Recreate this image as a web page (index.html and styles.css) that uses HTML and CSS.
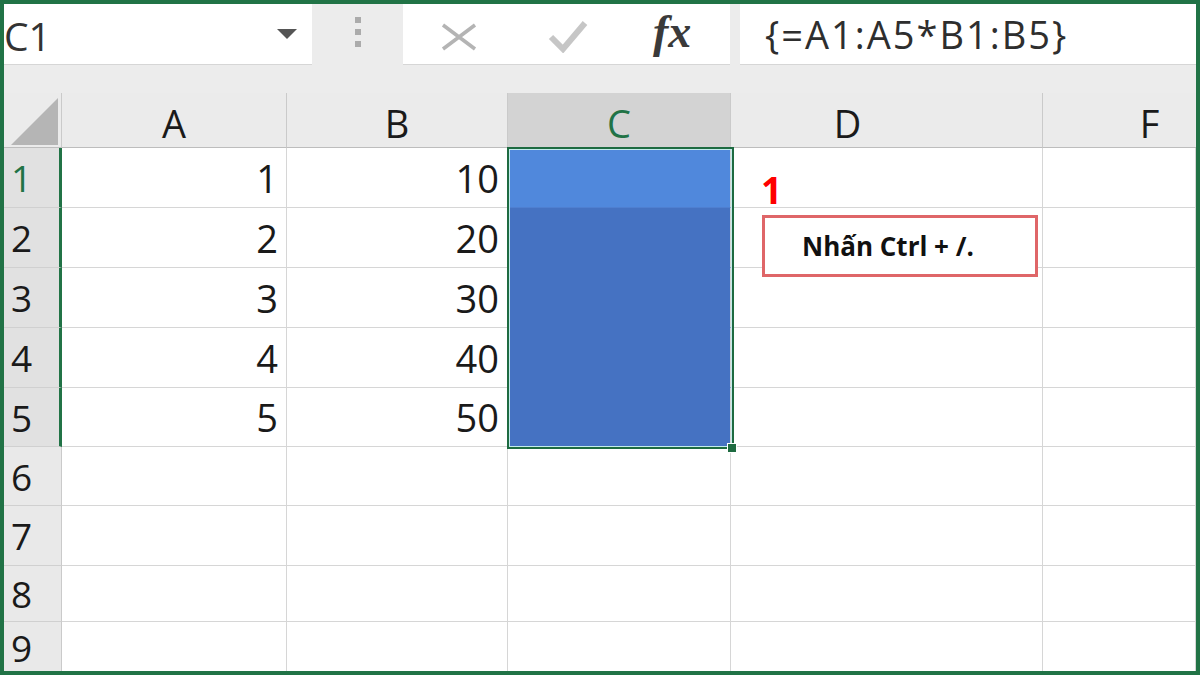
FILE: index.html
```html
<!DOCTYPE html>
<html lang="vi">
<head>
    <meta charset="UTF-8">
    <meta name="viewport" content="width=device-width, initial-scale=1.0">
    <title>Mảng công thức</title>
    <link rel="stylesheet" href="styles.css">
</head>
<body>
    <div class="frame">
        <!-- thanh công thức -->
        <div class="toolbar">
            <div class="namebox">
                <span class="ref">C1</span>
                <span class="caret"></span>
            </div>
            <div class="grip"><i></i><i></i><i></i></div>
            <div class="fx-buttons">
                <svg class="ico-x" width="38" height="28" viewBox="0 0 38 28">
                    <path d="M3 2 L35 26 M35 2 L3 26" stroke="#b4b4b4" stroke-width="3.6" fill="none"/>
                </svg>
                <svg class="ico-ok" width="40" height="34" viewBox="0 0 40 34">
                    <polyline points="3,18 15,30 37,4" stroke="#c6c6c6" stroke-width="6" fill="none"/>
                </svg>
                <span class="fx">fx</span>
            </div>
            <div class="formula">{=A1:A5*B1:B5}</div>
        </div>

        <!-- bảng tính -->
        <div class="sheet">
            <div class="hd corner"><span class="tri"></span></div>
            <div class="hd">A</div>
            <div class="hd">B</div>
            <div class="hd active">C</div>
            <div class="hd col-d">D</div>
            <div class="hd col-f">F</div>

            <div class="rh sel current">1</div>
            <div class="cell num">1</div>
            <div class="cell num">10</div>
            <div class="cell fill-top"></div>
            <div class="cell"></div>
            <div class="cell"></div>

            <div class="rh sel">2</div>
            <div class="cell num">2</div>
            <div class="cell num">20</div>
            <div class="cell fill"></div>
            <div class="cell"></div>
            <div class="cell"></div>

            <div class="rh sel">3</div>
            <div class="cell num">3</div>
            <div class="cell num">30</div>
            <div class="cell fill"></div>
            <div class="cell"></div>
            <div class="cell"></div>

            <div class="rh sel">4</div>
            <div class="cell num">4</div>
            <div class="cell num">40</div>
            <div class="cell fill"></div>
            <div class="cell"></div>
            <div class="cell"></div>

            <div class="rh sel">5</div>
            <div class="cell num">5</div>
            <div class="cell num">50</div>
            <div class="cell fill"></div>
            <div class="cell"></div>
            <div class="cell"></div>

            <div class="rh">6</div>
            <div class="cell"></div>
            <div class="cell"></div>
            <div class="cell"></div>
            <div class="cell"></div>
            <div class="cell"></div>

            <div class="rh">7</div>
            <div class="cell"></div>
            <div class="cell"></div>
            <div class="cell"></div>
            <div class="cell"></div>
            <div class="cell"></div>

            <div class="rh">8</div>
            <div class="cell"></div>
            <div class="cell"></div>
            <div class="cell"></div>
            <div class="cell"></div>
            <div class="cell"></div>

            <div class="rh">9</div>
            <div class="cell"></div>
            <div class="cell"></div>
            <div class="cell"></div>
            <div class="cell"></div>
            <div class="cell"></div>

            <!-- vùng chọn C1:C5 -->
            <div class="selection"></div>
            <div class="handle"></div>

            <!-- chú thích -->
            <div class="step">1</div>
            <div class="callout">Nhấn Ctrl + /.</div>
        </div>
    </div>
</body>
</html>
```

FILE: styles.css
```css
body {
    margin: 0;
    padding: 0;
    font-family: "Open Sans", "Noto Sans", sans-serif;
    color: #1a1a1a;
}
.frame {
    width: 1200px;
    height: 675px;
    box-sizing: border-box;
    border: 4px solid #217346;
    background: #ececec;
    display: flex;
    flex-direction: column;
    overflow: hidden;
}

/* thanh công thức */
.toolbar {
    display: flex;
    height: 61px;
    margin-bottom: 28px;
    flex-shrink: 0;
}
.namebox {
    width: 308px;
    background: #fff;
    border-bottom: 1px solid #d6d6d6;
    display: flex;
    align-items: center;
    justify-content: space-between;
    padding: 0 15px 0 0;
    box-sizing: border-box;
}
.ref {
    font-size: 39px;
    color: #333;
    line-height: 1;
    margin-top: 2px;
}
.caret {
    width: 0;
    height: 0;
    border-left: 10px solid transparent;
    border-right: 10px solid transparent;
    border-top: 10px solid #555;
    margin-top: -1px;
}
.grip {
    width: 91px;
    display: flex;
    flex-direction: column;
    align-items: center;
    justify-content: center;
    gap: 6px;
    margin-top: -5px;
}
.grip i {
    width: 6px;
    height: 6px;
    background: #ababab;
}
.fx-buttons {
    width: 327px;
    background: #fff;
    border-bottom: 1px solid #d6d6d6;
    display: flex;
    align-items: center;
}
.ico-x {
    margin-left: 37px;
    margin-top: 6px;
}
.ico-ok {
    margin-left: 70px;
    margin-top: 4px;
}
.fx {
    margin-left: 65px;
    font-family: "Liberation Serif", serif;
    font-style: italic;
    font-weight: bold;
    font-size: 46px;
    color: #3a3a3a;
    line-height: 1;
    margin-top: -4px;
}
.formula {
    flex: 1;
    margin-left: 10px;
    background: #fff;
    border-bottom: 1px solid #d6d6d6;
    display: flex;
    align-items: center;
    padding-left: 25px;
    font-size: 38px;
    letter-spacing: 2px;
    color: #2e2e2e;
}

/* bảng tính */
.sheet {
    position: relative;
    flex: 1;
    display: grid;
    grid-template-columns: 58px 225px 221px 223px 312px 153px;
    grid-template-rows: 55px 60px 60px 60px 60px 59px 59px 60px 56px 1fr;
    overflow: hidden;
}
.hd {
    background: #ebebeb;
    border-right: 1px solid #cacaca;
    border-bottom: 1px solid #bdbdbd;
    display: flex;
    align-items: center;
    justify-content: center;
    font-size: 38px;
    padding-top: 6px;
    box-sizing: border-box;
}
.hd.active {
    background: #d3d3d3;
    color: #217346;
}
.hd.col-d {
    padding-right: 78px;
}
.hd.col-f {
    padding-left: 60px;
    border-right: 0;
}
.corner {
    justify-content: flex-end;
    align-items: flex-end;
    padding: 0 3px 2px 0;
}
.tri {
    width: 47px;
    height: 47px;
    background: #b5b5b5;
    clip-path: polygon(100% 0, 100% 100%, 0 100%);
}
.rh {
    background: #e9e9e9;
    border-right: 1px solid #cacaca;
    border-bottom: 1px solid #d0d0d0;
    display: flex;
    align-items: center;
    padding-left: 7px;
    font-size: 37px;
    box-sizing: border-box;
}
.rh.sel {
    background: #e1e1e1;
    border-right: 3px solid #217346;
}
.rh.current {
    color: #217346;
}
.cell {
    background: #fff;
    border-right: 1px solid #d6d6d6;
    border-bottom: 1px solid #d6d6d6;
    box-sizing: border-box;
}
.num {
    display: flex;
    align-items: center;
    justify-content: flex-end;
    padding-right: 8px;
    font-size: 38px;
}
.fill-top {
    background: #5088dc;
    border-bottom-color: #4f7fd0;
}
.fill {
    background: #4572c2;
    border-bottom-color: #4572c2;
}
.selection {
    position: absolute;
    left: 503px;
    top: 54px;
    width: 227px;
    height: 302px;
    box-sizing: border-box;
    border: 2px solid #1e6b41;
    box-shadow: inset 0 0 0 1px #c4ecec;
}
.handle {
    position: absolute;
    left: 724px;
    top: 351px;
    width: 8px;
    height: 8px;
    background: #1e6b41;
    outline: 1px solid #fff;
}
.step {
    position: absolute;
    left: 757px;
    top: 78px;
    font-size: 37px;
    font-weight: bold;
    line-height: 1;
    color: #ff0000;
}
.callout {
    position: absolute;
    left: 758px;
    top: 122px;
    width: 276px;
    height: 62px;
    box-sizing: border-box;
    border: 3px solid #df6668;
    background: #fff;
    display: flex;
    align-items: center;
    padding-left: 37px;
    font-size: 26px;
    font-weight: bold;
    color: #111;
}
```
